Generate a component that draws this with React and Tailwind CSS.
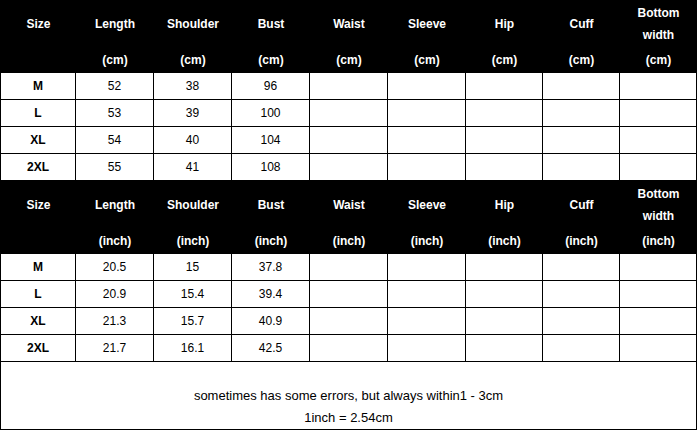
const cols = "grid grid-cols-[75px_78px_78px_78px_78px_78px_77px_77px_77px]";

const labels = ["Size", "Length", "Shoulder", "Bust", "Waist", "Sleeve", "Hip", "Cuff", "Bottom width"];

const cmRows = [
  ["M", "52", "38", "96"],
  ["L", "53", "39", "100"],
  ["XL", "54", "40", "104"],
  ["2XL", "55", "41", "108"],
];

const inchRows = [
  ["M", "20.5", "15", "37.8"],
  ["L", "20.9", "15.4", "39.4"],
  ["XL", "21.3", "15.7", "40.9"],
  ["2XL", "21.7", "16.1", "42.5"],
];

function HeaderRow({ unit }) {
  return (
    <div className={`${cols} h-[73px] bg-black text-[12px] font-bold text-white`}>
      {labels.map((label, i) => (
        <div key={label} className="flex flex-col items-center">
          <div className="flex h-[47px] w-[56px] items-center justify-center text-center leading-[22px]">
            {label}
          </div>
          <div className="flex h-[26px] items-center">{i === 0 ? "" : `(${unit})`}</div>
        </div>
      ))}
    </div>
  );
}

function DataRow({ row }) {
  return (
    <div className={`${cols} h-[27px] border-b border-black text-[12px] text-black`}>
      {Array.from({ length: 9 }).map((_, i) => (
        <div
          key={i}
          className={`flex items-center justify-center ${i < 8 ? "border-r border-black" : ""} ${i === 0 ? "font-bold" : ""}`}
        >
          {row[i] || ""}
        </div>
      ))}
    </div>
  );
}

export default function App() {
  return (
    <div className="h-[431px] w-[698px] bg-white font-['Liberation_Sans',Arial,sans-serif]">
      <div className="w-[697px] border-l border-r border-black">
        <HeaderRow unit="cm" />
        {cmRows.map((r) => (
          <DataRow key={r[0]} row={r} />
        ))}
        <HeaderRow unit="inch" />
        {inchRows.map((r) => (
          <DataRow key={r[0]} row={r} />
        ))}
        {/* footer note */}
        <div className="flex h-[68px] flex-col items-center justify-end border-b border-black text-[13px] leading-[22px] text-black">
          <p>sometimes has some errors, but always within1 - 3cm</p>
          <p>1inch = 2.54cm</p>
        </div>
      </div>
    </div>
  );
}
